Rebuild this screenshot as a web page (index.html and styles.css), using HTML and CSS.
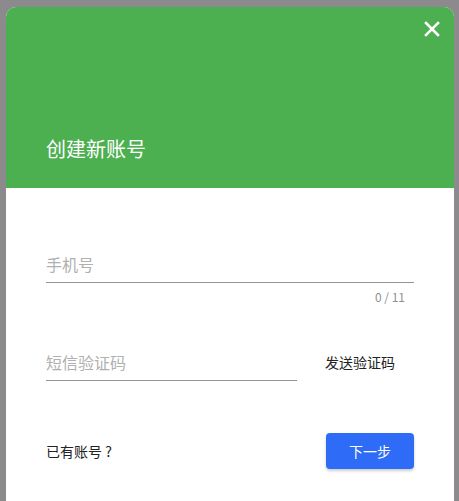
FILE: index.html
```html
<!DOCTYPE html>
<html>
<head>
  <title>创建新账号</title>
  <link rel="stylesheet" href="styles.css">
</head>
<body>
  <div class="dialog">
    <div class="dialog-header">
      <button class="close-btn" aria-label="关闭">
        <svg width="16" height="16" viewBox="0 0 16 16">
          <path d="M2 2 L14 14 M14 2 L2 14" stroke="#fff" stroke-width="2.6" stroke-linecap="square"/>
        </svg>
      </button>
      <h1 class="dialog-title">创建新账号</h1>
    </div>
    <div class="dialog-body">
      <div class="field">
        <input type="text" class="text-input" placeholder="手机号" maxlength="11">
        <div class="counter">0 / 11</div>
      </div>
      <div class="code-row">
        <input type="text" class="text-input code-input" placeholder="短信验证码">
        <span class="send-code">发送验证码</span>
      </div>
      <div class="dialog-footer">
        <span class="have-account">已有账号 ?</span>
        <button class="next-btn">下一步</button>
      </div>
    </div>
  </div>
</body>
</html>
```

FILE: styles.css
```css
html, body {
  height: 100%;
}

body {
  margin: 0;
  background-color: #8c8a8c;
  font-family: "Noto Sans CJK SC", "Noto Sans", sans-serif;
  overflow: hidden;
}

.dialog {
  margin: 7px 0 0 6px;
  width: 448px;
  height: 520px;
  background-color: #fff;
  border-radius: 10px 10px 0 0;
  overflow: hidden;
}

.dialog-header {
  position: relative;
  height: 181px;
  box-sizing: border-box;
  padding: 0 40px 25px;
  background-color: #4caf50;
  display: flex;
  align-items: flex-end;
}

.dialog-title {
  margin: 0;
  color: #fff;
  font-size: 20px;
  font-weight: normal;
  line-height: 28px;
}

.close-btn {
  position: absolute;
  top: 14px;
  right: 14px;
  width: 16px;
  height: 16px;
  padding: 0;
  border: none;
  background: none;
  cursor: pointer;
}

.close-btn svg {
  display: block;
}

.dialog-body {
  padding: 63px 40px 0;
}

.text-input {
  display: block;
  width: 100%;
  height: 32px;
  box-sizing: border-box;
  padding: 0 0 6px;
  border: none;
  border-bottom: 1px solid #949494;
  outline: none;
  font-family: inherit;
  font-size: 16px;
  color: #222;
}

.text-input::placeholder {
  color: #b0b0b0;
}

.counter {
  margin: 6px 9px 0 0;
  text-align: right;
  font-size: 12px;
  line-height: 16px;
  color: #8f8f8f;
}

.code-row {
  margin-top: 44px;
  display: flex;
  align-items: center;
  gap: 28px;
}

.code-input {
  width: 251px;
  flex: none;
}

.send-code {
  font-size: 14px;
  color: #222;
  margin-top: -7px;
}

.dialog-footer {
  margin-top: 52px;
  display: flex;
  justify-content: space-between;
  align-items: center;
}

.have-account {
  font-size: 14px;
  color: #222;
}

.next-btn {
  width: 88px;
  height: 36px;
  border: none;
  border-radius: 4px;
  background-color: #2e6bf6;
  color: #fff;
  font-family: inherit;
  font-size: 14px;
  box-shadow: 0 2px 3px rgba(0, 0, 0, 0.2);
  cursor: pointer;
}
```
